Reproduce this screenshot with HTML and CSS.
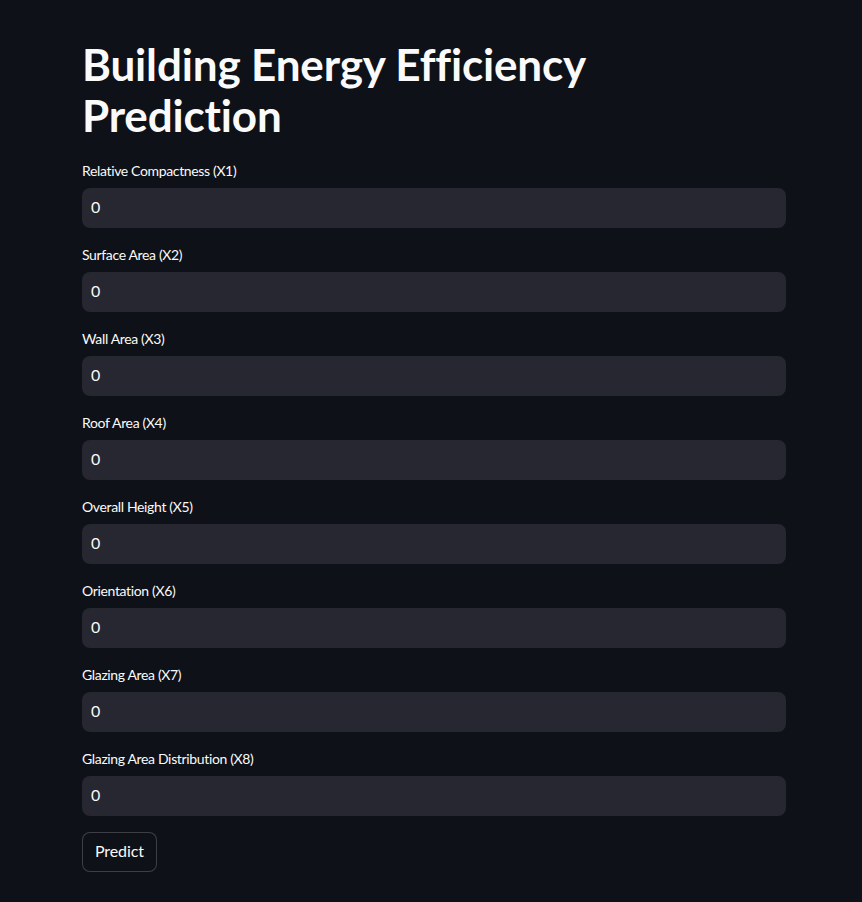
FILE: index.html
```html
<!DOCTYPE html>
<html lang="en">
<head>
<meta charset="utf-8">
<title>Building Energy Efficiency Prediction</title>
<link rel="stylesheet" href="styles.css">
</head>
<body>
<main class="app">
  <h1 class="title">Building Energy Efficiency Prediction</h1>
  <div class="field">
    <label class="label" for="x1">Relative Compactness (X1)</label>
    <input class="input" id="x1" type="text" value="0">
  </div>
  <div class="field">
    <label class="label" for="x2">Surface Area (X2)</label>
    <input class="input" id="x2" type="text" value="0">
  </div>
  <div class="field">
    <label class="label" for="x3">Wall Area (X3)</label>
    <input class="input" id="x3" type="text" value="0">
  </div>
  <div class="field">
    <label class="label" for="x4">Roof Area (X4)</label>
    <input class="input" id="x4" type="text" value="0">
  </div>
  <div class="field">
    <label class="label" for="x5">Overall Height (X5)</label>
    <input class="input" id="x5" type="text" value="0">
  </div>
  <div class="field">
    <label class="label" for="x6">Orientation (X6)</label>
    <input class="input" id="x6" type="text" value="0">
  </div>
  <div class="field">
    <label class="label" for="x7">Glazing Area (X7)</label>
    <input class="input" id="x7" type="text" value="0">
  </div>
  <div class="field">
    <label class="label" for="x8">Glazing Area Distribution (X8)</label>
    <input class="input" id="x8" type="text" value="0">
  </div>
  <div class="actions">
    <button class="btn" type="button">Predict</button>
  </div>
</main>
</body>
</html>
```
FILE: styles.css
```css
html, body {
  margin: 0;
  padding: 0;
  background: #0e1117;
  color: #fafafa;
  font-family: "Lato", "Noto Sans", sans-serif;
}
.app {
  width: 704px;
  padding: 39px 0 0 82px;
  display: flex;
  flex-direction: column;
  gap: 16px;
}
.title {
  margin: 0 0 3px 0;
  font-size: 44px;
  font-weight: 700;
  line-height: 51px;
  letter-spacing: -0.15px;
}
.field {
  display: flex;
  flex-direction: column;
}
.label {
  font-size: 14px;
  line-height: 22px;
  height: 24px;
  margin-bottom: 4px;
  letter-spacing: -0.35px;
  color: #fafafa;
}
.input {
  box-sizing: border-box;
  height: 40px;
  width: 100%;
  border: none;
  border-radius: 8px;
  background: #262730;
  color: #fafafa;
  font-family: inherit;
  font-size: 16px;
  padding: 0 9px 3px 9px;
  outline: none;
}
.actions {
  display: flex;
}
.btn {
  box-sizing: border-box;
  height: 40px;
  padding: 0 12px 3px 12px;
  border: 1px solid rgba(250, 250, 250, 0.2);
  border-radius: 8px;
  background: #0e1117;
  color: #fafafa;
  font-family: inherit;
  font-size: 16px;
  letter-spacing: -0.1px;
}
```
